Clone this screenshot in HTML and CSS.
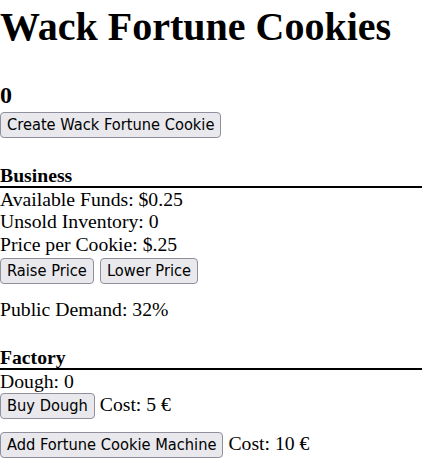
FILE: index.html
```html
<!DOCTYPE html>
<html lang="en">
<head>
<meta charset="utf-8">
<title>Wack Fortune Cookies</title>
<link rel="stylesheet" href="styles.css">
</head>
<body>
<h1 class="title">Wack Fortune Cookies</h1>
<h2 class="count">0</h2>
<div class="create-row"><button class="btn">Create Wack Fortune Cookie</button></div>

<section class="business">
  <h3 class="section-head">Business</h3>
  <div class="line">Available Funds: $0.25</div>
  <div class="line">Unsold Inventory: 0</div>
  <div class="line">Price per Cookie: $.25</div>
  <div class="btn-row price-row">
    <button class="btn">Raise Price</button>
    <button class="btn">Lower Price</button>
  </div>
  <div class="line demand">Public Demand: 32%</div>
</section>

<section class="factory">
  <h3 class="section-head">Factory</h3>
  <div class="line">Dough: 0</div>
  <div class="btn-row cost-row dough-row">
    <button class="btn">Buy Dough</button>
    <span>Cost: 5 €</span>
  </div>
  <div class="btn-row cost-row machine-row">
    <button class="btn">Add Fortune Cookie Machine</button>
    <span>Cost: 10 €</span>
  </div>
</section>
</body>
</html>
```
FILE: styles.css
```css
html, body {
  margin: 0;
  padding: 0;
  background: #ffffff;
  color: #000000;
}

body {
  font-family: "Liberation Serif", "Times New Roman", serif;
  font-size: 19.7px;
  line-height: 22.4px;
}

.title {
  margin: 0;
  padding-top: 5px;
  font-size: 40px;
  line-height: 44px;
  font-weight: bold;
}

.count {
  margin: 32px 0 0 0;
  font-size: 24px;
  line-height: 28px;
  font-weight: bold;
}

.create-row {
  margin-top: 3px;
  display: flex;
}

.btn {
  font-family: "DejaVu Sans Condensed", "Liberation Sans", Arial, sans-serif;
  font-size: 16.3px;
  line-height: 22px;
  color: #000000;
  background: #e9e9ed;
  border: 1px solid #8f8f9d;
  border-radius: 4px;
  padding: 1px 6px;
  margin: 0;
}

.business {
  margin-top: 26px;
}

.section-head {
  margin: 0;
  font-size: 19.7px;
  line-height: 22px;
  font-weight: bold;
  border-bottom: 2px solid #000000;
}

.btn-row {
  display: flex;
  align-items: baseline;
}

.price-row {
  margin-top: 3px;
  gap: 6px;
}

.demand {
  margin-top: 14px;
}

.factory {
  margin-top: 25px;
}

.cost-row {
  gap: 5px;
}

.dough-row {
  margin-top: 1px;
}

.machine-row {
  margin-top: 13px;
}
```
